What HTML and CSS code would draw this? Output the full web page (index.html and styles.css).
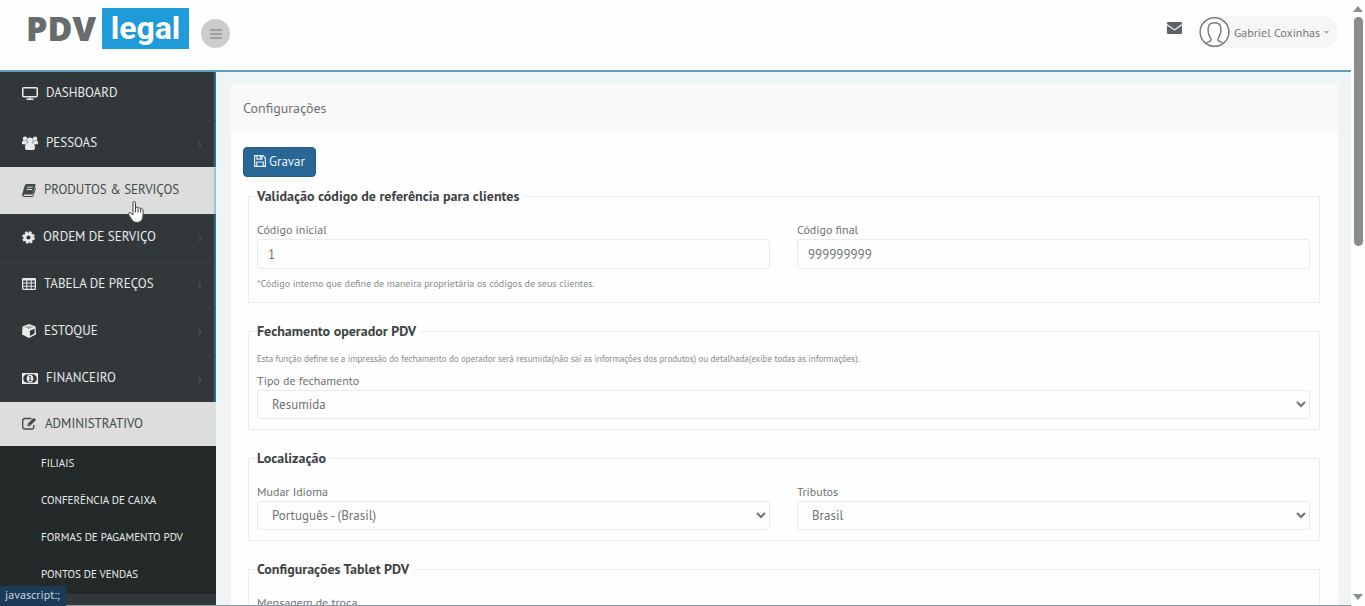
FILE: index.html
```html
<!DOCTYPE html>
<html lang="pt-BR">
<head>
    <meta charset="UTF-8">
    <meta name="viewport" content="width=device-width, initial-scale=1.0">
    <title>PDV Legal - Configurações</title>
    <link rel="stylesheet" href="styles.css">
</head>
<body>
    <div class="page">
        <header class="topbar">
            <a class="logo" href="#"><span class="logo-pdv">PDV</span><span class="logo-legal">legal</span></a>
            <button class="menu-toggle" type="button" aria-label="Menu">
                <svg width="12" height="10" viewBox="0 0 12 10"><path d="M0 1h12M0 5h12M0 9h12" stroke="#8f9190" stroke-width="1.600"/></svg>
            </button>
            <div class="topbar-right">
                <a class="mail" href="#" aria-label="Mensagens">
                    <svg width="15" height="12" viewBox="0 0 15 12" fill="#5d6364"><path d="M1 0h13q1 0 1 1v1L7.500 7.200 0 2V1q0-1 1-1zM0 3.500l7.500 5.100L15 3.500V11q0 1-1 1H1q-1 0-1-1z"/></svg>
                </a>
                <button class="user" type="button">
                    <svg class="avatar" width="31" height="32" viewBox="0 0 32 32" fill="#fff" stroke="#7a7d7d" stroke-width="1.500"><circle cx="16" cy="16" r="14.800"/><path d="M7.500 27.500c1.500-1.500 4.500-1.500 5-3.500.3-2-2.500-3.500-3-8C9 10 10 6.500 16 6.500S23 10 22.500 16c-.5 4.500-3.300 6-3 8 .5 2 3.500 2 5 3.500"/></svg>
                    <span>Gabriel Coxinhas</span>
                    <svg width="5" height="3" viewBox="0 0 5 3"><path d="M0 0h5L2.500 3z" fill="#aaa"/></svg>
                </button>
            </div>
        </header>

        <div class="content">
            <nav class="sidebar">
                <ul class="menu">
                    <li><a class="item first" href="#">
                        <svg width="16" height="13" viewBox="0 0 16 13" fill="none" stroke="currentColor"><rect x=".75" y=".75" width="14.500" height="9" rx="1" stroke-width="1.500"/><path d="M8 10v2M4.500 12.300h7" stroke-width="1.400"/></svg>
                        DASHBOARD</a></li>
                    <li><a class="item" href="#">
                        <svg width="16" height="14" viewBox="0 0 16 14" fill="currentColor"><circle cx="3" cy="2.600" r="2.200"/><circle cx="13" cy="2.600" r="2.200"/><circle cx="8" cy="4.500" r="3"/><path d="M0 8V6q0-1.500 1.500-1.500h3L5 7l-2 1.500zM16 8V6q0-1.500-1.500-1.500h-3L11 7l2 1.500zM3 12q0-5 3-5h4q3 0 3 5 0 2-2 2H5q-2 0-2-2z"/></svg>
                        PESSOAS<span class="arrow">›</span></a></li>
                    <li><a class="item light" href="#">
                        <svg width="14" height="13" viewBox="0 0 14 13" fill="currentColor"><path d="M4.500 0h8q1.300 0 1 1.300L11 9.500q-.3 1-1.500 1H2.200q-.7 0-.7.700t.8.800h8.200l2.700-8.500q.8.500.5 1.500L11.500 12q-.3 1-1.500 1H2Q-.3 13 .2 10L2.800 1.500Q3.200 0 4.500 0z"/><path d="M5.200 3.200h5.500M4.500 5.500H10" stroke="#ddd"/></svg>
                        PRODUTOS &amp; SERVIÇOS</a></li>
                    <li><a class="item" href="#">
                        <svg width="13" height="13" viewBox="0 0 13 13" fill="none" stroke="currentColor"><circle cx="6.500" cy="6.500" r="3.600" stroke-width="3"/><circle cx="6.500" cy="6.500" r="5.300" stroke-width="2" stroke-dasharray="2.500 1.660"/></svg>
                        ORDEM DE SERVIÇO<span class="arrow">›</span></a></li>
                    <li><a class="item" href="#">
                        <svg width="14" height="12" viewBox="0 0 14 12" fill="none" stroke="currentColor"><rect x=".6" y=".6" width="12.800" height="10.800" rx="1" stroke-width="1.200"/><path d="M0 1.500h14" stroke-width="2"/><path d="M0 5h14M0 8.200h14M4.800 1v11M9.200 1v11"/></svg>
                        TABELA DE PREÇOS<span class="arrow">›</span></a></li>
                    <li><a class="item" href="#">
                        <svg width="14" height="14" viewBox="0 0 14 14"><path d="M7 0l6.500 2.500L14 10.500 7 14 0 10.500.5 2.500z" fill="currentColor"/><path d="M2.500 3.300L7 1.600l4.500 1.700L7 5z" fill="#32383a" opacity=".35"/><path d="M7.900 6.700l4.600-1.900v4.800l-4.600 2.500z" fill="#32383a"/></svg>
                        ESTOQUE<span class="arrow">›</span></a></li>
                    <li><a class="item" href="#">
                        <svg width="16" height="11" viewBox="0 0 16 11"><rect x=".7" y=".7" width="14.600" height="9.600" fill="none" stroke="currentColor" stroke-width="1.400"/><path d="M1 1h3L1 4zM15 1h-3l3 3zM1 10h3L1 7zM15 10h-3l3-3z" fill="currentColor"/><ellipse cx="8" cy="5.500" rx="3.300" ry="3.700" fill="currentColor"/><path d="M7 4l1.200-.8v4M6.800 7.500h2.600" stroke="#32383a" fill="none"/></svg>
                        FINANCEIRO<span class="arrow">›</span></a></li>
                    <li><a class="item light open" href="#">
                        <svg width="15" height="13" viewBox="0 0 15 13" fill="none" stroke="currentColor"><path d="M9.500 1.500H3Q.7 1.500.7 3.800v6Q.7 12 3 12h6.500q2.300 0 2.300-2.200V8" stroke-width="1.300"/><path d="M5.500 9.200V7l6.300-6.300 2.200 2.200-6.300 6.300z" fill="currentColor" stroke="none"/><path d="M6.500 7.200l1 1" stroke="#ddd"/></svg>
                        ADMINISTRATIVO</a>
                        <ul class="submenu">
                            <li><a href="#">FILIAIS</a></li>
                            <li><a href="#">CONFERÊNCIA DE CAIXA</a></li>
                            <li><a href="#">FORMAS DE PAGAMENTO PDV</a></li>
                            <li><a href="#">PONTOS DE VENDAS</a></li>
                        </ul>
                    </li>
                </ul>
            </nav>

            <main class="main">
                <section class="panel">
                    <h1 class="panel-title">Configurações</h1>
                    <form class="panel-body">
                        <button class="btn-save" type="button">
                            <svg width="12" height="12" viewBox="0 0 12 12" fill="none" stroke="currentColor" stroke-width="1.200"><path d="M.6.600h8.400l2.400 2.400v8.400H.6zM3 .6v3.600h5V.6M2.800 11.400V7h6.400v4.400"/><path d="M6.600 1v2.500" stroke-width="1.500"/></svg>
                            Gravar
                        </button>

                        <fieldset>
                            <legend>Validação código de referência para clientes</legend>
                            <div class="row">
                                <div class="field">
                                    <label for="codInicial">Código inicial</label>
                                    <input type="text" id="codInicial" value="1">
                                </div>
                                <div class="field">
                                    <label for="codFinal">Código final</label>
                                    <input type="text" id="codFinal" value="999999999">
                                </div>
                            </div>
                            <p class="help after">*Código interno que define de maneira proprietária os códigos de seus clientes.</p>
                        </fieldset>

                        <fieldset>
                            <legend>Fechamento operador PDV</legend>
                            <p class="help">Esta função define se a impressão do fechamento do operador será resumida(não sai as informações dos produtos) ou detalhada(exibe todas as informações).</p>
                            <div class="row">
                                <div class="field">
                                    <label for="tipo">Tipo de fechamento</label>
                                    <select id="tipo"><option>Resumida</option><option>Detalhada</option></select>
                                </div>
                            </div>
                        </fieldset>

                        <fieldset>
                            <legend>Localização</legend>
                            <div class="row">
                                <div class="field">
                                    <label for="idioma">Mudar Idioma</label>
                                    <select id="idioma"><option>Português - (Brasil)</option></select>
                                </div>
                                <div class="field">
                                    <label for="tributos">Tributos</label>
                                    <select id="tributos"><option>Brasil</option></select>
                                </div>
                            </div>
                        </fieldset>

                        <fieldset>
                            <legend>Configurações Tablet PDV</legend>
                            <div class="row">
                                <div class="field">
                                    <label for="troca">Mensagem de troca</label>
                                    <input type="text" id="troca">
                                </div>
                            </div>
                        </fieldset>
                    </form>
                </section>
            </main>
        </div>
    </div>

    <div class="scrollbar">
        <svg width="10" height="6" viewBox="0 0 10 6"><path d="M5 0l5 6H0z" fill="#8b8d8d"/></svg>
        <div class="track"><div class="thumb"></div></div>
        <svg width="10" height="6" viewBox="0 0 10 6"><path d="M5 6l5-6H0z" fill="#8b8d8d"/></svg>
    </div>

    <div class="status">javascript:;</div>
    <svg class="cursor" width="18" height="23" viewBox="0 0 18 23"><path d="M5 1.800q0-1.300 1.200-1.300t1.300 1.300V7q.3-1 1.400-.9 1 .1 1.100 1.200.4-.8 1.400-.6 1 .2 1.100 1.200.5-.6 1.400-.3 1 .3 1.100 1.400v5q0 3-1 4.500-1.500 3-5 3-3.300 0-5-2.500L.8 14q-.8-1.500.2-2.200 1.200-.7 2.500.8L5 14z" fill="#fff" stroke="#444" stroke-width="1"/><path d="M7.500 7v4.500M10 7.500v4M12.500 8v3.500" stroke="#444" fill="none"/></svg>
</body>
</html>
```
FILE: styles.css
```css
* { box-sizing: border-box; }
body { margin: 0; height: 100vh; display: flex; overflow: hidden; background: #fdfefd; color: #6f7373; font-family: "PT Sans", "Noto Sans", sans-serif; font-size: 12px; line-height: 18px; }
ul { list-style: none; margin: 0; padding: 0; }
a { color: inherit; text-decoration: none; }
button, input, select { font-family: inherit; }
svg { flex: none; }

.page { flex: 1; min-width: 0; display: flex; flex-direction: column; border-bottom: 1px solid #8d9ba3; }

/* topo */
.topbar { flex: none; height: 72px; padding: 8px 13px 0 26px; display: flex; align-items: flex-start; border-bottom: 2px solid #5d9fbe; }
.logo { display: flex; height: 41px; line-height: 41px; font-family: "Open Sans", sans-serif; font-weight: 800; }
.logo-pdv { width: 76px; font-size: 34px; color: #666b6b; }
.logo-legal { width: 87px; text-align: center; font-family: Roboto, sans-serif; font-size: 32px; font-weight: bold; color: #fff; background: #1e9bd8; }
.menu-toggle { width: 29px; height: 29px; margin: 11px 0 0 12px; padding: 0; border: 0; border-radius: 50%; background: #cbcccb; display: flex; align-items: center; justify-content: center; }
.topbar-right { margin-left: auto; display: flex; align-items: center; gap: 17px; padding-top: 8px; }
.mail { display: flex; padding-bottom: 8px; }
.user { display: flex; align-items: center; gap: 4px; height: 32px; padding: 0 9px 0 0; border: 0; border-radius: 16px; background: #f5f6f5; color: #757878; font-size: 12px; }

.content { flex: 1; min-height: 0; display: flex; }

/* menu lateral */
.sidebar { flex: none; width: 216px; overflow: hidden; background: #32383a; color: #e9ebeb; }
.item { display: flex; align-items: center; gap: 8px; height: 47px; padding: 0 12px 2px 22px; border-top: 1px solid #373d3f; border-right: 2px solid #22709c; font-size: 13px; }
.item.first { height: 48px; border-top: 0; padding-bottom: 6px; }
.item.light { background: #dcdddc; border-top-color: #dcdddc; border-right-color: #8fc9dd; color: #43494a; }
.item.open { height: 44px; border-right-color: #dcdddc; }
.arrow { margin-left: auto; color: #50585a; font-size: 14px; }
.submenu { background: #242a2a; }
.submenu a { display: block; height: 37px; line-height: 34px; padding-left: 41px; font-size: 11px; }

/* conteúdo */
.main { flex: 1; min-width: 0; overflow: hidden; padding: 12px 13px 0 15px; background: #eff4f5; }
.panel { background: #fdfefd; }
.panel-title { margin: 0; padding: 0 12px; height: 49px; line-height: 49px; background: #f8f9f8; font-size: 14px; font-weight: 500; }
.panel-body { padding: 14px 18px 0 12px; }
.btn-save { display: flex; align-items: center; justify-content: center; gap: 3px; height: 30px; padding: 0 10px 2px; border: 1px solid #225b89; border-radius: 4px; background: #286695; color: #e8f1f7; font-size: 13px; }

fieldset { min-width: 0; margin: 18px 0 0 5px; padding: 10px 9px 10px 8px; border: 1px solid #eceeed; }
.btn-save + fieldset { margin-top: 9px; }
legend { padding: 0 4px 0 0; line-height: 20px; font-size: 14px; font-weight: 600; color: #3d4344; }
.row { display: flex; gap: 27px; padding-top: 5px; }
.field { flex: 1; min-width: 0; }
label { display: block; line-height: 18px; font-size: 12px; }
input, select { display: block; width: 100%; height: 30px; padding: 0 10px; border: 1px solid #e8ebea; border-radius: 3px; background: #fdfefd; color: #6f7373; font-size: 13px; }
select { height: 29px; }
.help { margin: 0; line-height: 16px; font-size: 9px; color: #868a8a; }
.help.after { margin-top: 7px; font-size: 10px; }

/* barra de rolagem */
.scrollbar { flex: none; width: 14px; padding: 6px 0; display: flex; flex-direction: column; align-items: center; gap: 5px; }
.track { flex: 1; }
.thumb { width: 9px; height: 40%; border-radius: 5px; background: #8b8d8d; }

.status { position: absolute; left: 0; bottom: 0; width: 66px; height: 20px; padding-left: 5px; background: #1b3a57; color: #c9d4dd; font-size: 12px; line-height: 18px; }
.cursor { position: absolute; left: 128px; top: 201px; }
```
